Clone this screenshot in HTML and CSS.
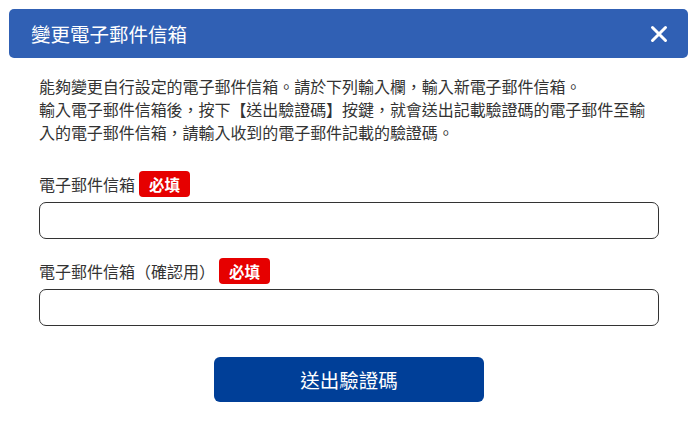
FILE: index.html
```html
<!DOCTYPE html>
<html lang="zh-Hant">
<head>
<meta charset="utf-8">
<link rel="stylesheet" href="styles.css">
</head>
<body>
<div class="modal">
  <div class="modal-header">
    <h1 class="modal-title">變更電子郵件信箱</h1>
    <button class="close-btn" aria-label="關閉">
      <svg width="18" height="18" viewBox="0 0 18 18"><path d="M2.5 2.5 L15.5 15.5 M15.5 2.5 L2.5 15.5" stroke="#fff" stroke-width="3" stroke-linecap="round"/></svg>
    </button>
  </div>
  <div class="modal-body">
    <p class="desc">能夠變更自行設定的電子郵件信箱。請於下列輸入欄，輸入新電子郵件信箱。<br>輸入電子郵件信箱後，按下【送出驗證碼】按鍵，就會送出記載驗證碼的電子郵件至輸入的電子郵件信箱，請輸入收到的電子郵件記載的驗證碼。</p>
    <div class="field first">
      <div class="label-row"><span class="label">電子郵件信箱</span><span class="badge">必填</span></div>
      <input class="input" type="email">
    </div>
    <div class="field">
      <div class="label-row"><span class="label">電子郵件信箱（確認用）</span><span class="badge">必填</span></div>
      <input class="input" type="email">
    </div>
    <div class="actions">
      <button class="submit">送出驗證碼</button>
    </div>
  </div>
</div>
</body>
</html>
```
FILE: styles.css
```css
* { box-sizing: border-box; }
html, body { margin: 0; padding: 0; background: #fff; }
body {
  font-family: "Noto Sans CJK TC", "Noto Sans", sans-serif;
  color: #333;
  padding: 9px;
}
.modal { width: 679px; }
.modal-header {
  height: 49px;
  background: #3060b4;
  border-radius: 5px;
  display: flex;
  align-items: center;
  justify-content: space-between;
  padding: 0 20px 0 22px;
}
.modal-title {
  margin: 0;
  font-size: 19.5px;
  font-weight: 400;
  color: #fff;
  line-height: 1;
}
.close-btn {
  background: none;
  border: 0;
  padding: 0;
  width: 18px;
  height: 18px;
  display: flex;
}
.modal-body { padding: 17px 29px 0 30px; }
.desc {
  margin: 0;
  font-size: 16px;
  line-height: 23px;
  letter-spacing: -0.05px;
}
.field.first { margin-top: 27px; }
.field { margin-top: 19px; }
.label-row {
  display: flex;
  align-items: center;
  height: 26px;
}
.label { font-size: 16px; line-height: 26px; }
.badge {
  margin-left: 4px;
  background: #e60000;
  color: #fff;
  font-weight: 700;
  font-size: 15.5px;
  line-height: 26px;
  height: 26px;
  padding: 0 10px;
  border-radius: 4px;
}
.input {
  display: block;
  width: 620px;
  height: 37px;
  margin-top: 5px;
  border: 1px solid #333;
  border-radius: 7px;
  background: #fff;
}
.actions {
  display: flex;
  justify-content: center;
  margin-top: 31px;
}
.submit {
  width: 270px;
  height: 45px;
  background: #003f98;
  color: #fff;
  border: 0;
  border-radius: 6px;
  font-family: inherit;
  font-size: 19.5px;
}
```
